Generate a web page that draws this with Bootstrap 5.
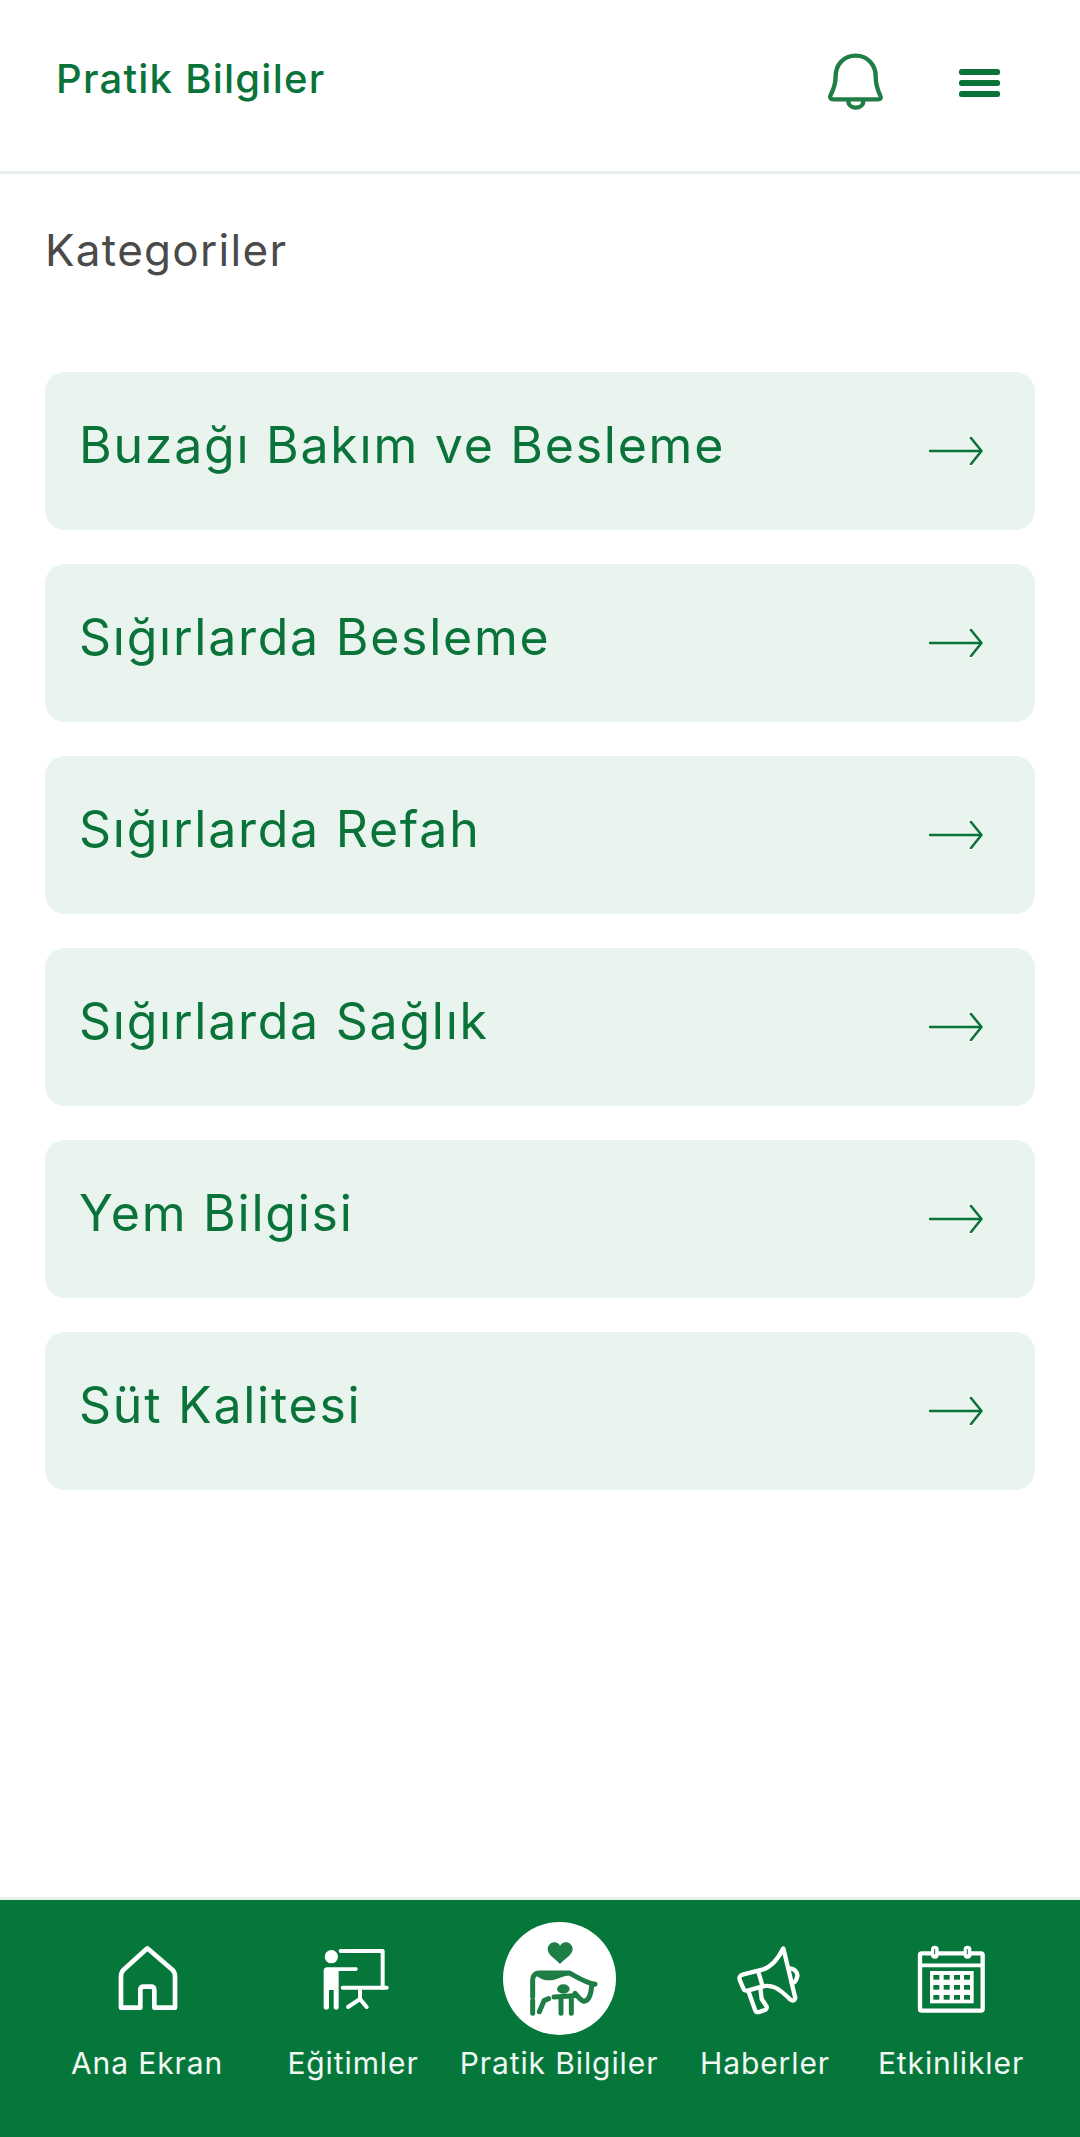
<!DOCTYPE html>
<html lang="tr">

<head>
  <meta charset="utf-8">
  <meta name="viewport" content="width=device-width">
  <title>Pratik Bilgiler</title>
  <link href="https://cdn.jsdelivr.net/npm/bootstrap@5.3.3/dist/css/bootstrap.min.css" rel="stylesheet" />
  <style>
    body { font-family: Inter, "Noto Sans", sans-serif; background: #fff; }
    .app-page { height: 100vh; }
    .top-bar { height: 174px; padding: 0 80px 6px 56px; border-bottom: 3px solid #e8efeb; }
    .top-title { font-size: 40px; font-weight: 500; color: #0a7339; margin: 0 0 8px; letter-spacing: 1.25px; }
    .top-icons { gap: 54px; }
    .cat-heading { font-size: 44px; font-weight: 400; color: #4a4a4a; margin: 48px 0 93px; line-height: 1.3; letter-spacing: 1.3px; }
    .cat-wrap { padding: 0 45px; }
    .cat-list { gap: 34px; }
    .cat-item { height: 158px; padding: 0 52px 0 34px; background: #eaf4ef; border-radius: 20px; color: #0a7339; text-decoration: none; }
    .cat-name { font-size: 50px; padding-bottom: 12px; letter-spacing: 1.75px; }
    .tab-bar { height: 240px; padding: 22px 46px 0 44px; background: #06773a; border-top: 3px solid #e2f0e8; display: grid; grid-template-columns: 206px 206px 206px 206px 166px; box-sizing: border-box; }
    .tab-item { color: #f1f8f4; text-decoration: none; font-size: 30px; letter-spacing: 0.9px; white-space: nowrap; }
    .tab-icon { height: 113px; margin-bottom: 6px; }
    .tab-active { width: 113px; height: 113px; background: #fff; border-radius: 50%; }
  </style>
</head>

<body>
  <div class="app-page d-flex flex-column">
    <header class="top-bar d-flex align-items-center justify-content-between flex-shrink-0">
      <h1 class="top-title">Pratik Bilgiler</h1>
      <div class="top-icons d-flex align-items-center">
        <!-- bell -->
        <svg width="90" height="85" viewBox="0 0 270 255" fill="none" stroke="#1f7d46" stroke-width="13" stroke-linecap="round" stroke-linejoin="round">
          <path d="M122 47C85 47 62 75 62 108C62 125 60 140 47 165C43 174 47 178 55 178H188C197 178 200 174 195 165C183 140 182 125 182 108C182 75 158 47 122 47Z" />
          <path d="M100 182C100 210 145 210 145 182" />
        </svg>
        <!-- menu -->
        <svg width="41" height="28" viewBox="0 0 41 28" fill="#0a7339">
          <rect width="41" height="6" rx="2.500" />
          <rect y="11" width="41" height="6" rx="2.500" />
          <rect y="22" width="41" height="6" rx="2.500" />
        </svg>
      </div>
    </header>

    <main class="cat-wrap flex-grow-1">
      <h2 class="cat-heading">Kategoriler</h2>
      <div id="catList" class="cat-list d-flex flex-column"></div>
    </main>

    <nav class="tab-bar flex-shrink-0">
      <a class="tab-item d-flex flex-column align-items-center" href="#">
        <div class="tab-icon d-flex align-items-center justify-content-center">
          <svg width="90" height="85" viewBox="-9 3 270 255" fill="none" stroke="#fff" stroke-width="14" stroke-linejoin="round" stroke-linecap="round">
            <path d="M127 40L56 104C50 110 48 116 48 125V218H106V165C106 158 110 155 116 155H138C144 155 148 158 148 165V218H210V125C210 116 208 110 202 104Z" />
          </svg>
        </div>
        <span>Ana Ekran</span>
      </a>
      <a class="tab-item d-flex flex-column align-items-center" href="#">
        <div class="tab-icon d-flex align-items-center justify-content-center">
          <svg width="90" height="85" viewBox="-6 3 270 255" fill="none" stroke="#fff" stroke-width="12" stroke-linecap="round" stroke-linejoin="round">
            <circle cx="64" cy="65" r="20" fill="#fff" stroke="none" />
            <path d="M92 48H218V158" />
            <path d="M98 158H230" />
            <path d="M150 160V192M150 192L114 216M150 192L170 216" />
            <path d="M52 97H137C141 97 143 99 143 102C143 106 141 108 137 108H86V217C86 222 83 224 79 224C74 224 71 222 71 217V165H57V217C57 222 54 224 49 224C44 224 41 222 41 217V108C41 100 45 97 52 97Z" fill="#fff" stroke="none" />
          </svg>
        </div>
        <span>Eğitimler</span>
      </a>
      <a class="tab-item d-flex flex-column align-items-center" href="#">
        <div class="tab-icon d-flex align-items-center justify-content-center">
          <div class="tab-active d-flex align-items-center justify-content-center">
            <!-- cow, calf and heart -->
            <svg width="113" height="113" viewBox="69 36 339 339" fill="none" stroke="#1f7d46" stroke-width="15" stroke-linecap="round" stroke-linejoin="round">
              <path d="M240 162C228 148 203 135 203 118C203 105 213 97 224 97C231 97 237 101 240 107C244 101 250 97 257 97C268 97 278 105 278 118C278 135 252 148 240 162Z" fill="#1f7d46" stroke="none" />
              <path d="M158 260V210C158 196 166 189 178 189H268C290 200 315 218 345 223" />
              <path d="M172 196C185 205 200 212 222 206C240 202 250 195 265 193Z" fill="#1f7d46" stroke-width="6" />
              <path d="M335 228C333 255 325 272 312 274C302 272 295 260 285 250" />
              <ellipse cx="250" cy="237" rx="19" ry="14" fill="#1f7d46" stroke="none" />
              <path d="M222 261L282 257M243 262V310M274 260V310" />
              <path d="M158 272V310M178 305L192 272L206 266" />
            </svg>
          </div>
        </div>
        <span>Pratik Bilgiler</span>
      </a>
      <a class="tab-item d-flex flex-column align-items-center" href="#">
        <div class="tab-icon d-flex align-items-center justify-content-center">
          <svg width="90" height="85" viewBox="-15 3 270 255" fill="none" stroke="#fff" stroke-width="13" stroke-linecap="round" stroke-linejoin="round">
            <path d="M175 40C160 70 140 95 115 103L55 118C44 121 41 127 45 137L55 160C58 167 62 168 70 166L110 155C140 147 160 158 195 193C205 200 213 195 210 185Z" />
            <path d="M100 110L113 154" />
            <path d="M70 168L90 224C93 232 97 233 105 230L120 225C127 221 127 215 122 210L110 192L106 158" />
            <path d="M193 100C210 100 222 115 215 130C212 139 206 144 200 143" />
          </svg>
        </div>
        <span>Haberler</span>
      </a>
      <a class="tab-item d-flex flex-column align-items-center" href="#">
        <div class="tab-icon d-flex align-items-center justify-content-center">
          <svg width="90" height="85" viewBox="3 3 270 255">
            <rect x="45" y="55" width="188" height="172" rx="5" fill="none" stroke="#fff" stroke-width="13" />
            <path d="M45 91H233" stroke="#fff" stroke-width="11" />
            <rect x="78" y="32" width="23" height="39" rx="11" fill="#fff" />
            <rect x="176" y="32" width="23" height="39" rx="11" fill="#fff" />
            <path d="M89 42V58M187 42V58" stroke="#06773a" stroke-width="3" />
            <!-- day grid -->
            <rect x="75" y="108" width="131" height="97" fill="#fff" />
            <g id="dayCells" fill="#06773a"></g>
          </svg>
        </div>
        <span>Etkinlikler</span>
      </a>
    </nav>
  </div>

  <script>
    const categories = ["Buzağı Bakım ve Besleme", "Sığırlarda Besleme", "Sığırlarda Refah", "Sığırlarda Sağlık", "Yem Bilgisi", "Süt Kalitesi"]
    const catList = document.querySelector("#catList")
    categories.forEach(function (name) {
      const row = document.createElement("a")
      row.className = "cat-item d-flex align-items-center justify-content-between"
      row.href = "#"
      row.innerHTML = `<span class="cat-name">${name}</span>
        <svg width="54" height="28" viewBox="0 0 54 28" fill="none" stroke="#0a7339" stroke-width="2.500" stroke-linecap="round" stroke-linejoin="round"><path d="M1 14H52M42 1L52.500 14L42 27" /></svg>`
      catList.appendChild(row)
    })

    // calendar squares, 4 across and 3 down
    let cells = ""
    for (const y of [120, 150, 180]) {
      for (const x of [85, 116, 147, 177]) {
        cells += `<rect x="${x}" y="${y}" width="18" height="14" />`
      }
    }
    document.querySelector("#dayCells").innerHTML = cells
  </script>
  <script src="https://cdn.jsdelivr.net/npm/bootstrap@5.3.3/dist/js/bootstrap.bundle.min.js"></script>
</body>

</html>
